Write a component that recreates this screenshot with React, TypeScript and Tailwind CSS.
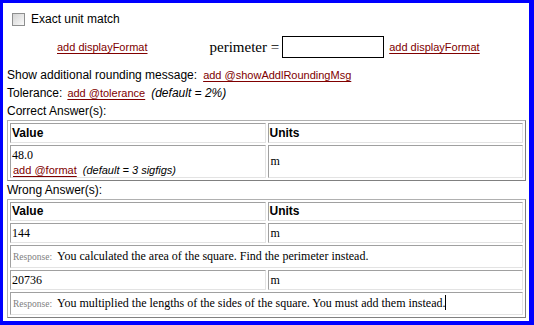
import React from "react";

const sans = "font-['Liberation_Sans',Arial,sans-serif]";
const serif = "font-['Liberation_Serif','Times_New_Roman',serif]";

const cell =
  "border border-t-[#a0a0a0] border-l-[#a0a0a0] border-r-[#e3e3e3] border-b-[#e3e3e3] p-0 align-middle leading-[15px]";

const tableCls =
  "w-full border-separate border-spacing-[2px] border border-t-[#b0b0b0] border-l-[#b0b0b0] border-r-[#808080] border-b-[#808080]";

const Link: React.FC<{ children: React.ReactNode; className?: string }> = ({
  children,
  className = "",
}) => (
  <a
    href="#"
    className={`${sans} text-[11px] text-[#800000] underline underline-offset-[2px] [text-decoration-skip-ink:none] ${className}`}
  >
    {children}
  </a>
);

const wrongAnswers = [
  {
    value: "144",
    units: "m",
    response: "You calculated the area of the square. Find the perimeter instead.",
  },
  {
    value: "20736",
    units: "m",
    response:
      "You multiplied the lengths of the sides of the square. You must add them instead.",
    caret: true,
  },
];

export default function App() {
  return (
    <div
      className={`${sans} w-[534px] h-[325px] bg-white text-black text-[12px] leading-[16px] border-[#0000ff] border-t-[3px] border-l-[3px] border-r-[5px] border-b-[4px] pl-[4px] pr-[3px] overflow-hidden`}
    >
      {/* exact unit match */}
      <div className="flex items-center h-[32px]">
        <span className="ml-[5px] w-[13px] h-[13px] border border-[#8e8f8f] bg-gradient-to-br from-[#d4d4d4] to-[#fafafa]" />
        <span className="ml-[6px]">Exact unit match</span>
      </div>

      {/* answer line */}
      <div className="flex items-center h-[24px]">
        <Link className="ml-[50px]">add displayFormat</Link>
        <span className={`${serif} text-[15px] ml-[62px]`}>perimeter =</span>
        <span className="ml-[3px] w-[102px] h-[22px] border border-black bg-white" />
        <Link className="ml-[5px]">add displayFormat</Link>
      </div>

      <div className="flex items-center h-[18px] mt-[7px]">
        <span>Show additional rounding message:</span>
        <Link className="ml-[6px]">add @showAddlRoundingMsg</Link>
      </div>
      <div className="flex items-center h-[18px]">
        <span>Tolerance:</span>
        <Link className="ml-[5px]">add @tolerance</Link>
        <span className="ml-[6px] italic">(default = 2%)</span>
      </div>
      <div className="flex items-center h-[18px]">Correct Answer(s):</div>

      <table className={tableCls}>
        <tbody>
          <tr>
            <td className={`${cell} w-1/2 h-[20px] pl-[1px] font-bold`}>Value</td>
            <td className={`${cell} w-1/2 h-[20px] pl-[1px] font-bold`}>Units</td>
          </tr>
          <tr>
            <td className={`${cell} h-[33px] pl-[1px]`}>
              <div className={`${serif} text-[12px] leading-[16px]`}>48.0</div>
              <div className="leading-[14px] pl-[1px]">
                <Link>add @format</Link>
                <span className="ml-[6px] text-[11px] italic">(default = 3 sigfigs)</span>
              </div>
            </td>
            <td className={`${cell} h-[33px] pl-[2px] ${serif}`}>m</td>
          </tr>
        </tbody>
      </table>

      <div className="flex items-center h-[18px]">Wrong Answer(s):</div>

      <table className={tableCls}>
        <tbody>
          <tr>
            <td className={`${cell} w-1/2 h-[19px] pl-[1px] font-bold`}>Value</td>
            <td className={`${cell} w-1/2 h-[19px] pl-[1px] font-bold`}>Units</td>
          </tr>
          {wrongAnswers.map((w) => (
            <React.Fragment key={w.value}>
              <tr>
                <td className={`${cell} h-[20px] pl-[1px] ${serif}`}>{w.value}</td>
                <td className={`${cell} h-[20px] pl-[2px] ${serif}`}>{w.units}</td>
              </tr>
              <tr>
                <td colSpan={2} className={`${cell} h-[23px] pl-[2px] ${serif}`}>
                  <span className="text-[9.5px] text-[#808080]">Response:</span>
                  <span className="ml-[5px] text-[12px]">
                    {w.response}
                    {w.caret && (
                      <span className="inline-block w-[1px] h-[15px] bg-black align-[-3px]" />
                    )}
                  </span>
                </td>
              </tr>
            </React.Fragment>
          ))}
        </tbody>
      </table>
    </div>
  );
}
